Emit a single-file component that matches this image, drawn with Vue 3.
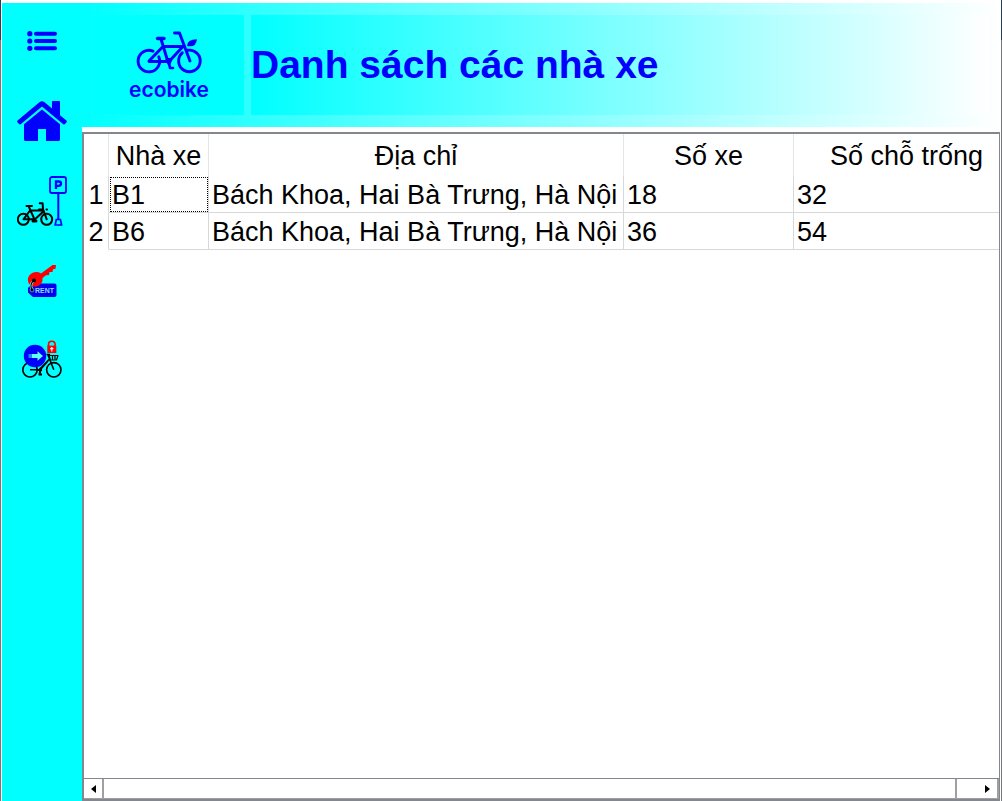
<script setup>
const columns = ['Nhà xe', 'Địa chỉ', 'Số xe', 'Số chỗ trống']
const rows = [
  { name: 'B1', address: 'Bách Khoa, Hai Bà Trưng, Hà Nội', bikes: 18, free: 32 },
  { name: 'B6', address: 'Bách Khoa, Hai Bà Trưng, Hà Nội', bikes: 36, free: 54 },
]
</script>

<template>
  <div class="window">
    <nav class="sidebar" aria-label="Menu">
      <button type="button" aria-label="Menu">
        <svg viewBox="0 0 50 50" fill="#00f">
          <circle cx="12.800" cy="17.700" r="2.600" /><circle cx="12.800" cy="25" r="2.600" /><circle cx="12.800" cy="32.300" r="2.600" />
          <rect x="17" y="15.700" width="23" height="4" rx="2" />
          <rect x="17" y="23" width="23" height="4" rx="2" />
          <rect x="17" y="30.300" width="23" height="4" rx="2" />
        </svg>
      </button>
      <button type="button" aria-label="Trang chủ">
        <svg viewBox="0 0 50 50" fill="#00f">
          <path d="M0.6 24.6 Q-.3 25.4 .5 26.3 L2 28.1 Q2.8 28.9 3.7 28.2 L25 10.6 L46.3 28.2 Q47.2 28.9 48 28.1 L49.5 26.3 Q50.3 25.4 49.4 24.6 L43 19.3 V6 Q43 5 42 5 H36 Q35 5 35 6 V12.5 L27.6 6.3 Q25 4.2 22.4 6.3 Z" />
          <path d="M25 13.4 L43 28.2 V43.5 Q43 45 41.5 45 H29 V33 H21 V45 H8.5 Q7 45 7 43.5 V28.2 Z" />
        </svg>
      </button>
      <button type="button" aria-label="Bãi xe">
        <svg viewBox="0 0 50 50" fill="none">
          <g stroke="#000" stroke-width="2" stroke-linecap="round" stroke-linejoin="round">
            <circle cx="6.300" cy="43.300" r="5.500" /><circle cx="29.700" cy="43.300" r="5.500" />
            <path d="M9.500 30H15 M12 31L13.500 34.500L17.500 43.300H6.500L13 34.500H25.500 M25.800 36L18 43.300 M22.700 27.300H25.600L26 33L29.700 43.300" />
            <path d="M16 45H19" stroke-width="3" />
            <path d="M22 33.500H26 M29.500 33.500H30" />
          </g>
          <rect x="33" y="1" width="16" height="16" rx="2" stroke="#00f" stroke-width="1.800" />
          <path d="M39 13V5.500H41.700Q44 5.500 44 7.600Q44 9.800 41.700 9.800H39" stroke="#00f" stroke-width="2.300" />
          <path d="M41.300 17V43" stroke="#00f" stroke-width="2" />
          <path d="M39.300 43.500H43.400L44.600 49H38.200Z" stroke="#00f" stroke-width="1.700" />
        </svg>
      </button>
      <button type="button" aria-label="Thuê xe">
        <svg viewBox="0 0 50 50">
          <path d="M15 27.500H37.500Q39.500 27.500 39.500 29.500V39Q39.500 41 37.500 41H16L11 36.500V32Z" fill="#00e" />
          <path d="M19 16Q22 15.500 24 17.500L35.500 9H39L38.600 12.700L36 13.200L35.500 16L32.500 16L32 19L29 19.200L25.500 22Q26 28 21 30Q17 31 14.500 30Q10 27 11 22Q13 16.500 19 16Z" fill="#f00" />
          <path d="M17 25Q12 28 15 33.500" fill="none" stroke="#9ff" stroke-width="2.600" />
          <circle cx="17" cy="24.500" r="2" fill="#000" />
          <circle cx="15" cy="34" r="1.900" fill="#000" stroke="#8df" stroke-width=".6" />
          <path d="M17 24.500Q12 28 15 34" fill="none" stroke="#000" stroke-width="1.300" />
          <text x="18" y="37" class="rent">RENT</text>
        </svg>
      </button>
      <button type="button" aria-label="Trả xe">
        <svg viewBox="0 0 50 50" fill="none">
          <g stroke="#000" stroke-width="1.600" stroke-linejoin="round">
            <circle cx="13" cy="33.800" r="7.200" /><circle cx="36.800" cy="33.800" r="7.200" />
            <path d="M13 33.800H22L33 22.500 M31 19L36.800 33.800 M23 34L31 25 M29.500 18.500H33" />
            <path d="M20 34H25 M21.500 38.500H25 M24 32L22.500 38" stroke-width="2" />
            <path d="M32 19.500H41L39.500 24H33.500Z M35.500 20V24 M38 20V24" stroke-width="1.200" />
          </g>
          <circle cx="18" cy="20" r="11.200" fill="#00f" />
          <path d="M15 18H20.500V15.200L26 20L20.500 24.800V22H15Z" fill="#6ff" />
          <path d="M11.500 18H15V22H11.500Z" fill="#28f" />
          <path d="M31.500 10V8.500A3.300 3.300 0 0 1 38.100 8.500V10" stroke="#f00" stroke-width="1.600" />
          <rect x="30.300" y="9.600" width="9" height="7.400" fill="#f00" />
          <path d="M34.800 15.500V12M33.300 13.200L34.800 11.500L36.300 13.200" stroke="#fff" stroke-width="1.100" />
        </svg>
      </button>
    </nav>

    <main>
      <header>
        <svg class="logo" viewBox="0 0 150 100" role="img" aria-label="ecobike">
          <g fill="none" stroke="#00f" stroke-width="2.900" stroke-linecap="round" stroke-linejoin="round">
            <path d="M59 36.100A10.800 10.800 0 1 0 64.800 41.800" />
            <path d="M88.300 37.800A10.800 10.800 0 1 0 93.500 35.300" />
            <path d="M55 46L69 31.500H89L75 46.500H55 M67 24L74 47 M80.500 18H85.500L96 46" />
            <path d="M63.500 23.500H70" stroke-width="3.300" />
            <path d="M73 44.500H77L75 49Z" fill="#00f" />
            <path d="M75 48L76 53H79" stroke-width="2.600" />
          </g>
          <path d="M93 31Q93 24.500 103 24.200Q102 33 93 31Z" fill="#00f" />
          <text x="75" y="82" class="brand">ecobike</text>
        </svg>
        <h1>Danh sách các nhà xe</h1>
      </header>

      <section class="panel">
        <div class="view">
          <table>
            <colgroup><col class="c-index"><col class="c-name"><col class="c-address"><col class="c-bikes"><col class="c-free"></colgroup>
            <thead>
              <tr>
                <td></td>
                <th v-for="c in columns" :key="c" scope="col">{{ c }}</th>
              </tr>
            </thead>
            <tbody>
              <tr v-for="(r, i) in rows" :key="r.name">
                <th scope="row">{{ i + 1 }}</th>
                <td :class="{ focused: i === 0 }">{{ r.name }}</td>
                <td>{{ r.address }}</td>
                <td>{{ r.bikes }}</td>
                <td>{{ r.free }}</td>
              </tr>
            </tbody>
          </table>
        </div>
        <div class="scrollbar">
          <button type="button" class="step left" aria-label="Cuộn trái">
            <svg viewBox="0 0 5 8"><path d="M5 0V8L0 4Z" /></svg>
          </button>
          <div class="thumb"></div>
          <button type="button" class="step right" aria-label="Cuộn phải">
            <svg viewBox="0 0 5 8"><path d="M0 0V8L5 4Z" /></svg>
          </button>
        </div>
      </section>
    </main>
  </div>
</template>

<style>
body {
  margin: 0;
}
</style>

<style scoped>
.window {
  box-sizing: border-box;
  display: flex;
  height: 100vh;
  padding: 3px 0 0 1px;
  border: solid #77797c;
  border-width: 0 1px;
  border-image: linear-gradient(#24405c 41px, #77797c 41px) 1;
  background: #fff;
  color: #000;
  font-family: "Liberation Sans", Arial, sans-serif;
  overflow: hidden;
}

button {
  display: flex;
  align-items: center;
  justify-content: center;
  padding: 0;
  border: 0;
  background: none;
}

.sidebar {
  display: flex;
  flex: none;
  flex-direction: column;
  gap: 4px;
  width: 80px;
  background: #0ff;
}

.sidebar button {
  height: 76px;
}

.sidebar svg {
  width: 50px;
  height: 50px;
}

.rent {
  fill: #8df;
  font-size: 7px;
  font-weight: bold;
}

main {
  display: flex;
  flex: 1;
  flex-direction: column;
  gap: 5px;
  min-width: 0;
}

header {
  display: flex;
  gap: 7px;
  padding: 12px;
  background: linear-gradient(to right, #0ff, #fff);
}

.logo {
  flex: none;
  width: 150px;
  height: 100px;
  background: #0ff;
}

.brand {
  fill: #00f;
  font-family: Inter, sans-serif;
  font-size: 21px;
  font-weight: 600;
  text-anchor: middle;
}

h1 {
  flex: 1;
  margin: 0;
  background: linear-gradient(to right, #0ff, #fff);
  color: #00f;
  font-size: 39px;
  line-height: 100px;
  white-space: nowrap;
}

.panel {
  display: flex;
  flex: 1;
  flex-direction: column;
  min-height: 0;
  margin-right: 1px;
  border: 2px solid #828790;
  border-right-width: 1px;
}

.view {
  flex: 1;
  min-height: 0;
  overflow: hidden;
}

table {
  width: 936px;
  table-layout: fixed;
  border-collapse: separate;
  border-spacing: 0;
  font-size: 27px;
  line-height: 34px;
}

.c-index { width: 25px; }
.c-name { width: 100px; }
.c-address { width: 415px; }
.c-bikes { width: 170px; }
.c-free { width: 226px; }

th,
td {
  padding: 2px 0 0 3px;
  border-right: 1px solid #d8d8d8;
  border-bottom: 1px solid #d8d8d8;
  font-weight: normal;
  text-align: left;
  white-space: nowrap;
}

thead th,
thead td {
  height: 40px;
  padding: 2px 0 0;
  border-bottom: 0;
  border-right-color: #e5e5e5;
  text-align: center;
}

tbody th {
  padding: 2px 0 0;
  border-bottom-color: #fff;
  text-align: center;
}

.focused {
  outline: 1px dotted #000;
  outline-offset: -2px;
}

.scrollbar {
  display: flex;
  height: 20px;
  border-top: 1px solid #828790;
}

.step {
  box-sizing: border-box;
  flex: none;
  border-right: 2px solid #a0a0a0;
  border-bottom: 1px solid #a0a0a0;
}

.step svg {
  width: 5px;
  height: 8px;
}

.left {
  width: 20px;
}

.right {
  width: 42px;
  padding-left: 20px;
}

.thumb {
  flex: 1;
  border-right: 2px solid #a0a0a0;
  border-bottom: 1px solid #a0a0a0;
}
</style>
